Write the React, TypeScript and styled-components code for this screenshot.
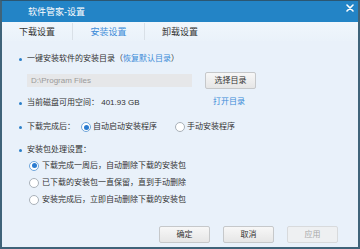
import styled, { createGlobalStyle } from "styled-components";

const GlobalStyle = createGlobalStyle`
  html, body {
    margin: 0;
    padding: 0;
    background: #ffffff;
  }
  body {
    font-family: "Liberation Sans", "Noto Sans CJK SC", sans-serif;
  }
`;

export default function App() {
  return (
    <>
      <GlobalStyle />
      <Window>
        <TitleBar>
          <Title>软件管家-设置</Title>
          <Close aria-label="close">
            <svg width="8" height="8" viewBox="0 0 8 8">
              <path d="M1 1 L7 7 M7 1 L1 7" stroke="#fff" strokeWidth="1.6" strokeLinecap="round" />
            </svg>
          </Close>
        </TitleBar>
        <Tabs>
          <Tab>下载设置</Tab>
          <TabSep />
          <Tab $active>安装设置</Tab>
          <TabSep />
          <Tab>卸载设置</Tab>
        </Tabs>
        <Body>
          <BulletRow>
            <Dot />
            <Text>
              一键安装软件的安装目录（<Link>恢复默认目录</Link>）
            </Text>
          </BulletRow>

          <DirGrid>
            <PathInput>D:\Program Files</PathInput>
            <Button>选择目录</Button>
            <BulletRow>
              <Dot />
              <Text>当前磁盘可用空间： 401.93 GB</Text>
            </BulletRow>
            <OpenLink>打开目录</OpenLink>
          </DirGrid>

          <AfterRow>
            <Dot />
            <Text>下载完成后：</Text>
            <Choice $gap={6}>
              <Radio $checked />
              <Text>自动启动安装程序</Text>
            </Choice>
            <Choice $gap={18}>
              <Radio />
              <Text>手动安装程序</Text>
            </Choice>
          </AfterRow>

          <PackHeader>
            <Dot />
            <Text>安装包处理设置：</Text>
          </PackHeader>

          <Options>
            <Option>
              <Radio $checked />
              <Text>下载完成一周后，自动删除下载的安装包</Text>
            </Option>
            <Option>
              <Radio />
              <Text>已下载的安装包一直保留，直到手动删除</Text>
            </Option>
            <Option>
              <Radio />
              <Text>安装完成后，立即自动删除下载的安装包</Text>
            </Option>
          </Options>

          <Footer>
            <Button>确定</Button>
            <Button>取消</Button>
            <Button $disabled>应用</Button>
          </Footer>
        </Body>
      </Window>
    </>
  );
}

const Window = styled.div`
  width: 360px;
  height: 249px;
  box-sizing: border-box;
  border: 2px solid #3f6379;
  border-top: 1px solid #2b5672;
  border-bottom-width: 2px;
  background: #e9f1fa;
  display: flex;
  flex-direction: column;
  overflow: hidden;
`;

const TitleBar = styled.div`
  height: 21px;
  flex: none;
  background: #2384c6;
  display: flex;
  align-items: center;
  padding-left: 26px;
  padding-right: 3px;
`;

const Title = styled.div`
  flex: 1;
  color: #ffffff;
  font-size: 9px;
  line-height: 12px;
`;

const Close = styled.div`
  width: 10px;
  height: 10px;
  display: flex;
  align-items: center;
  justify-content: center;
  margin-top: -7px;
`;

const Tabs = styled.div`
  height: 19px;
  flex: none;
  display: flex;
  align-items: center;
  background: linear-gradient(#f0f6fc, #eaf2fa);
`;

const Tab = styled.div<{ $active?: boolean }>`
  width: ${(p) => (p.$active ? 71 : 70)}px;
  text-align: center;
  font-size: 9px;
  line-height: 12px;
  color: ${(p) => (p.$active ? "#3b8bd8" : "#333333")};
`;

const TabSep = styled.div`
  width: 1px;
  height: 17px;
  background: #d9e0e7;
`;

const Body = styled.div`
  flex: 1;
  display: flex;
  flex-direction: column;
  padding: 12px 20px 4px 17px;
`;

const Text = styled.span`
  font-size: 8px;
  line-height: 12px;
  color: #333333;
  white-space: nowrap;
`;

const Link = styled.span`
  color: #3b8bd8;
`;

const Dot = styled.span`
  width: 3px;
  height: 3px;
  border-radius: 50%;
  background: #2b7fc8;
  margin-right: 5px;
  flex: none;
`;

const BulletRow = styled.div`
  display: flex;
  align-items: center;
  height: 12px;
`;

const DirGrid = styled.div`
  display: grid;
  grid-template-columns: 173px 51px;
  column-gap: 13px;
  row-gap: 8px;
  align-items: center;
  margin-top: 7px;
`;

const PathInput = styled.div`
  margin-left: 8px;
  height: 13px;
  background: #e6e7e9;
  color: #9a9a9a;
  font-size: 8px;
  line-height: 13px;
  padding-left: 4px;
`;

const Button = styled.div<{ $disabled?: boolean }>`
  width: 51px;
  height: 17px;
  box-sizing: border-box;
  border: 1px solid ${(p) => (p.$disabled ? "#d8dadc" : "#c6c8ca")};
  border-radius: 2px;
  background: ${(p) =>
    p.$disabled ? "#eef0f2" : "linear-gradient(#f7f7f7, #e6e6e6)"};
  color: ${(p) => (p.$disabled ? "#a8a8a8" : "#333333")};
  font-size: 8px;
  line-height: 15px;
  text-align: center;
`;

const OpenLink = styled.div`
  font-size: 8px;
  line-height: 12px;
  color: #3b8bd8;
  text-align: center;
  margin-top: -2px;
  padding-right: 3px;
`;

const AfterRow = styled(BulletRow)`
  margin-top: 12px;
`;

const Choice = styled.div<{ $gap: number }>`
  display: flex;
  align-items: center;
  margin-left: ${(p) => p.$gap}px;
`;

const Radio = styled.span<{ $checked?: boolean }>`
  width: 10px;
  height: 10px;
  box-sizing: border-box;
  border-radius: 50%;
  border: 1px solid ${(p) => (p.$checked ? "#6fa6db" : "#a9b1b9")};
  background: #ffffff;
  margin-right: 2px;
  flex: none;
  display: flex;
  align-items: center;
  justify-content: center;
  &::after {
    content: "";
    width: 5px;
    height: 5px;
    border-radius: 50%;
    background: #2a7bd0;
    display: ${(p) => (p.$checked ? "block" : "none")};
  }
`;

const PackHeader = styled(BulletRow)`
  margin-top: 11px;
`;

const Options = styled.div`
  display: flex;
  flex-direction: column;
  margin-top: 1px;
  padding-left: 10px;
`;

const Option = styled.div`
  display: flex;
  align-items: center;
  height: 17px;
  & > span:first-child {
    margin-right: 3px;
  }
`;

const Footer = styled.div`
  margin-top: auto;
  display: flex;
  justify-content: flex-end;
  gap: 13px;
`;
